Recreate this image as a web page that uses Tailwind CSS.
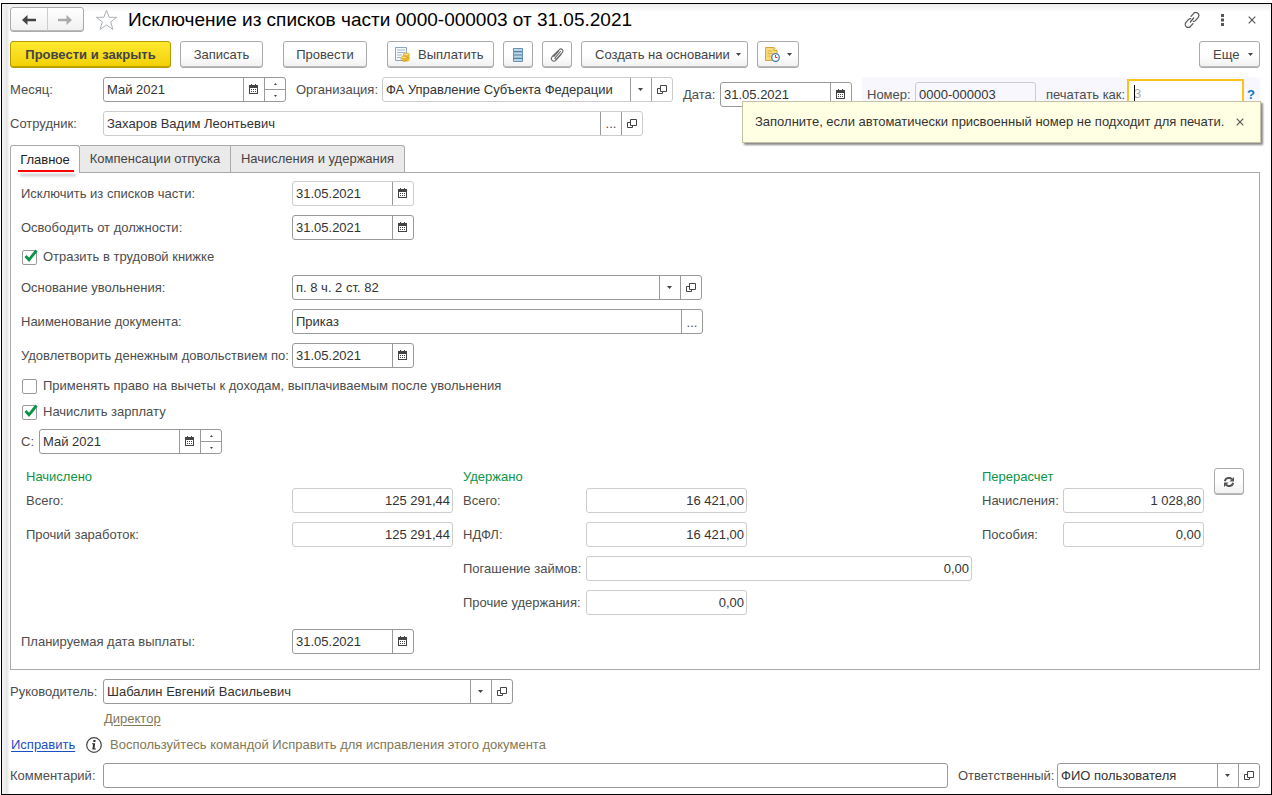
<!DOCTYPE html>
<html lang="ru">
<head>
<meta charset="utf-8">
<meta name="viewport" content="width=device-width, initial-scale=1">
<title>Исключение из списков части</title>
<script src="https://cdn.jsdelivr.net/npm/@tailwindcss/browser@4"></script>
</head>
<body class="flex min-h-screen bg-white pt-[3px] pl-px font-['Liberation_Sans',Arial,sans-serif] text-[13px] leading-4 text-[#4d4d4d]">

<svg class="hidden" aria-hidden="true">
  <symbol id="cal" viewBox="0 0 9 10"><path d="M0 1h9v9H0z M2 0h1v1H2z M6 0h1v1H6z" fill="#444"/><path d="M1 4h7v5H1z" fill="#fff"/><path d="M2 5h1v1H2zM4 5h1v1H4zM6 5h1v1H6zM2 7h1v1H2zM4 7h1v1H4zM6 7h1v1H6z" fill="#444"/></symbol>
  <symbol id="down" viewBox="0 0 5 3"><path d="M0 0h5L2.500 3z" fill="#444"/></symbol>
  <symbol id="up" viewBox="0 0 5 3"><path d="M0 3h5L2.500 0z" fill="#444"/></symbol>
  <symbol id="open" viewBox="0 0 10 10"><path d="M3.500 .5h6v6h-6zM3.500 3.500h-3v5h5v-2" fill="none" stroke="#444"/></symbol>
  <symbol id="tick" viewBox="0 0 15 14"><path d="M2.500 7 6 10.800 13.500 1.500" fill="none" stroke="#0a9447" stroke-width="2.800"/></symbol>
  <symbol id="cross" viewBox="0 0 8 8"><path d="M.7.700l6.600 6.600M7.300.700L.7 7.300" fill="none" stroke="#555" stroke-width="1.200"/></symbol>
</svg>

<main class="flex grow flex-col border border-black bg-[linear-gradient(to_bottom,#ececec,#ffffff00_8px),linear-gradient(to_right,#f4f4f4,#e6e6e6_5px,#fff_8px)] pt-[3px] pr-[11px] pb-[6px] pl-2">

  <header class="flex h-[25px] items-center">
    <div class="flex h-[25px] w-[74px] rounded-[3px] border border-[#aaa] bg-linear-to-b from-white to-[#f0f0f0] shadow-[inset_0_-1px_0_#bbb]">
      <button type="button" aria-label="Назад" class="grid flex-1 place-items-center border-r border-[#ccc]"><svg class="h-[10px] w-[14px]" viewBox="0 0 14 10"><path d="M0 5l5.500-5v3.800H14v2.400H5.500V10z" fill="#444"/></svg></button>
      <button type="button" aria-label="Вперед" class="grid flex-1 place-items-center"><svg class="h-[10px] w-[14px]" viewBox="0 0 14 10"><path d="M14 5L8.500 0v3.800H0v2.400h8.500V10z" fill="#aaa"/></svg></button>
    </div>
    <button type="button" aria-label="В избранное" class="ml-[11px]"><svg class="h-[22px] w-[23px]" viewBox="0 0 23 22"><path d="M11.500 1.300l2.700 7h7.500l-6 4.600 2.200 7.500-6.400-4.400-6.400 4.400 2.200-7.500-6-4.600h7.500z" fill="#fff" stroke="#a9b0b6"/></svg></button>
    <h1 class="ml-[10px] text-[19px] leading-6 text-black">Исключение из списков части 0000-000003 от 31.05.2021</h1>
    <div class="ml-auto flex items-center pr-1">
      <button type="button" aria-label="Ссылка"><svg class="h-4 w-4" viewBox="0 0 16 16" fill="none" stroke="#555" stroke-width="1.200" stroke-linecap="round"><path d="M7 4.300l2.300-2.500a2.900 2.900 0 0 1 4.900 3.500l-2.800 3.300a2.600 2.600 0 0 1-2 .8M9 11.700l-2.300 2.500a2.900 2.900 0 0 1-4.900-3.500l2.800-3.300a2.600 2.600 0 0 1 2-.8M6.300 10l3.400-4"/></svg></button>
      <button type="button" aria-label="Меню" class="ml-[21px]"><svg class="h-3 w-[3px]" viewBox="0 0 3 12"><path d="M0 0h3v3H0zM0 4.500h3v3H0zM0 9h3v3H0z" fill="#555"/></svg></button>
      <button type="button" aria-label="Закрыть" class="ml-6"><svg class="size-2"><use href="#cross"/></svg></button>
    </div>
  </header>

  <div class="mt-[9px] flex h-[27px]">
    <button type="button" class="w-[161px] rounded-[3px] border border-[#b59b00] bg-linear-to-b from-[#ffe92e] to-[#f2d000] font-bold text-[#444] shadow-[inset_0_-1px_0_#c0a400]">Провести и закрыть</button>
    <button type="button" class="ml-[9px] w-[83px] rounded-[3px] border border-[#aaa] bg-linear-to-b from-white from-50% to-[#f0f0f0] text-[#444] shadow-[inset_0_-1px_0_#bbb]">Записать</button>
    <button type="button" class="ml-5 w-[84px] rounded-[3px] border border-[#aaa] bg-linear-to-b from-white from-50% to-[#f0f0f0] text-[#444] shadow-[inset_0_-1px_0_#bbb]">Провести</button>
    <button type="button" class="ml-5 flex w-[107px] items-center gap-2 rounded-[3px] border border-[#aaa] bg-linear-to-b from-white from-50% to-[#f0f0f0] pl-[7px] text-[#444] shadow-[inset_0_-1px_0_#bbb]"><svg class="size-[15px] shrink-0" viewBox="0 0 15 15"><path d="M.5.500h11v13H.5z" fill="#f7fafc" stroke="#8ba6b9"/><path d="M2 3h8M2 5.500h8M2 8h5M2 10.500h4" stroke="#9db8ca"/><path d="M8 7.500c0-2 6.500-2 6.500 0v5.500c0 2-7 2-7 0v-3z" fill="#f2bd2b"/><ellipse cx="11.500" cy="7.500" rx="3" ry="1.400" fill="#ffe27a" stroke="#c98b10" stroke-width=".6"/><ellipse cx="9" cy="10.500" rx="2.800" ry="1.300" fill="#ffe27a" stroke="#c98b10" stroke-width=".6"/><path d="M6.200 11v2c1 1.600 5 1.600 6 0M12 11c1 0 2.300-.4 2.500-1" fill="none" stroke="#c98b10" stroke-width=".7"/></svg>Выплатить</button>
    <button type="button" aria-label="Список" class="ml-[9px] grid w-[30px] place-items-center rounded-[3px] border border-[#aaa] bg-linear-to-b from-white from-50% to-[#f0f0f0] shadow-[inset_0_-1px_0_#bbb]"><svg class="h-[14px] w-[10px]" viewBox="0 0 10 14"><path d="M.5.500h9v13h-9z" fill="#b9d5e8" stroke="#6992af"/><path d="M1 3.700h8M1 7h8M1 10.300h8" stroke="#587f9b" stroke-width="1.200"/></svg></button>
    <button type="button" aria-label="Файлы" class="ml-[9px] grid w-[30px] place-items-center rounded-[3px] border border-[#aaa] bg-linear-to-b from-white from-50% to-[#f0f0f0] shadow-[inset_0_-1px_0_#bbb]"><svg class="size-[14px]" viewBox="0 0 14 14" fill="none" stroke="#666" stroke-width="1.100" stroke-linecap="round"><path d="M10.500 3.500L5.300 9.600c-.9 1 .4 2.200 1.300 1.200l5.600-6.200c2-2.400-1-5-3.100-2.800L2.300 8.500c-2.600 3 1 6.300 3.700 3.600l5-5.400M8.800 3L4 8.400"/></svg></button>
    <button type="button" class="ml-[9px] flex w-[167px] items-center justify-between rounded-[3px] border border-[#aaa] bg-linear-to-b from-white from-50% to-[#f0f0f0] pr-[6px] pl-[13px] whitespace-nowrap text-[#444] shadow-[inset_0_-1px_0_#bbb]">Создать на основании<svg class="h-[3px] w-[5px]"><use href="#down"/></svg></button>
    <button type="button" aria-label="Отложенное" class="ml-[9px] flex w-[42px] items-center justify-between rounded-[3px] border border-[#aaa] bg-linear-to-b from-white from-50% to-[#f0f0f0] pr-[6px] pl-[7px] shadow-[inset_0_-1px_0_#bbb]"><svg class="size-[15px]" viewBox="0 0 15 15"><path d="M.5.500h8.500l3 3v10H.5z" fill="#f7db7c" stroke="#d3a73a"/><path d="M9 .5v3h3" fill="#fff3c0" stroke="#d3a73a"/><path d="M2.500 4h5M2.500 6.500h5M2.500 9h3" stroke="#d9b04a"/><circle cx="10.500" cy="10.500" r="3.800" fill="#fff" stroke="#4a7fb5" stroke-width="1.300"/><path d="M10.500 8v2.500H12.500" fill="none" stroke="#d33"/></svg><svg class="h-[3px] w-[5px]"><use href="#down"/></svg></button>
    <button type="button" class="ml-auto flex w-[61px] items-center justify-between rounded-[3px] border border-[#aaa] bg-linear-to-b from-white from-50% to-[#f0f0f0] pr-[6px] pl-[13px] text-[#444] shadow-[inset_0_-1px_0_#bbb]">Еще<svg class="h-[3px] w-[5px]"><use href="#down"/></svg></button>
  </div>

  <div class="relative mt-[9px] flex h-[30px] items-start whitespace-nowrap">
    <label for="month" class="w-[93px] shrink-0 leading-[25px]">Месяц:</label>
    <div class="flex h-[25px] w-[183px] rounded-[3px] border border-[#999] bg-white">
      <input id="month" value="Май 2021" class="w-0 flex-1 px-[3px] text-[#333] outline-none">
      <button type="button" aria-label="Календарь" class="grid w-[21px] place-items-center border-l border-[#999] pr-px pb-px"><svg class="h-[10px] w-[9px]"><use href="#cal"/></svg></button>
      <div class="flex w-[21px] flex-col border-l border-[#999]"><button type="button" aria-label="Больше" class="grid flex-1 place-items-center border-b border-[#999]"><svg class="h-[2px] w-[3px]"><use href="#up"/></svg></button><button type="button" aria-label="Меньше" class="grid flex-1 place-items-center"><svg class="h-[2px] w-[3px]"><use href="#down"/></svg></button></div>
    </div>
    <label for="org" class="ml-[10px] w-[86px] shrink-0 leading-[25px]">Организация:</label>
    <div class="flex h-[25px] w-[291px] rounded-[3px] border border-[#ccc] bg-white">
      <input id="org" value="ФА Управление Субъекта Федерации" class="w-0 flex-1 px-[3px] text-[#333] outline-none">
      <button type="button" aria-label="Выбрать" class="grid w-[21px] place-items-center border-l border-[#999] pr-px"><svg class="h-[3px] w-[5px]"><use href="#down"/></svg></button>
      <button type="button" aria-label="Открыть" class="grid w-[21px] place-items-center border-l border-[#999]"><svg class="size-[10px]"><use href="#open"/></svg></button>
    </div>
    <div class="ml-[10px] flex self-end">
      <label for="date" class="w-[37px] leading-[25px]">Дата:</label>
      <div class="flex h-[25px] w-[132px] rounded-[3px] border border-[#999] bg-white">
        <input id="date" value="31.05.2021" class="w-0 flex-1 px-[3px] text-[#333] outline-none">
        <button type="button" aria-label="Календарь" class="grid w-[21px] place-items-center border-l border-[#999] pr-px pb-px"><svg class="h-[10px] w-[9px]"><use href="#cal"/></svg></button>
      </div>
    </div>
    <div class="ml-[10px] flex h-[30px] grow items-end bg-[#f7f7fd] pl-[5px]">
      <label for="num" class="w-12 leading-[25px]">Номер:</label>
      <input id="num" value="0000-000003" readonly class="h-[25px] w-[121px] rounded-[3px] border border-[#ccc] px-[3px] text-[#333] outline-none">
      <label for="print" class="ml-[10px] w-[81px] leading-[25px]">печатать как:</label>
      <div class="relative h-[28px] w-[117px] border-2 border-[#fcc419] bg-white">
        <input id="print" placeholder="3" class="h-full w-full pl-[5px] outline-none placeholder:text-[#aaa]">
        <span class="absolute top-[4px] left-[5px] h-4 w-px bg-black"></span>
      </div>
      <button type="button" aria-label="Справка" class="ml-[3px] leading-[25px] font-bold text-[#0a78c8]">?</button>
    </div>
    <div role="tooltip" class="absolute top-[24px] -right-px z-10 flex h-[42px] w-[519px] items-center justify-between border border-[#c5c3a5] bg-[#ffffe4] pr-4 pl-3 text-[#333] shadow-[2px_2px_2px_#888]">Заполните, если автоматически присвоенный номер не подходит для печати.<button type="button" aria-label="Закрыть подсказку" class="grid"><svg class="size-2"><use href="#cross"/></svg></button></div>
  </div>

  <div class="mt-1 flex h-[25px]">
    <label for="emp" class="w-[93px] shrink-0 leading-[25px]">Сотрудник:</label>
    <div class="flex w-[540px] rounded-[3px] border border-[#ccc] bg-white">
      <input id="emp" value="Захаров Вадим Леонтьевич" class="w-0 flex-1 px-[3px] text-[#333] outline-none">
      <button type="button" aria-label="Выбрать" class="w-[21px] border-l border-[#999]">...</button>
      <button type="button" aria-label="Открыть" class="grid w-[21px] place-items-center border-l border-[#999]"><svg class="size-[10px]"><use href="#open"/></svg></button>
    </div>
  </div>

  <div role="tablist" class="relative z-1 mt-[9px] -mb-px flex h-[28px] text-[#444]">
    <button type="button" role="tab" aria-selected="true" class="relative w-[70px] rounded-t-[3px] border border-b-0 border-[#aaa] bg-white text-[#222]">Главное<span class="absolute right-[5px] bottom-px left-[7px] h-[2px] bg-[#ff0000] shadow-[2px_4px_3px_#bbb]"></span></button>
    <button type="button" role="tab" class="w-[151px] border border-l-0 border-[#aaa] bg-[#eaeaea]">Компенсации отпуска</button>
    <button type="button" role="tab" class="w-[174px] rounded-tr-[3px] border border-l-0 border-[#aaa] bg-[#eaeaea]">Начисления и удержания</button>
  </div>

  <section class="flex flex-col border border-[#aaa] bg-white pt-2 pr-[15px] pb-[15px] pl-[10px]">
    <div class="grid grid-cols-[271px_1fr] gap-y-[9px] leading-[25px]">
      <label for="d1">Исключить из списков части:</label>
      <div class="flex h-[25px] w-[122px] rounded-[3px] border border-[#ccc]"><input id="d1" value="31.05.2021" class="w-0 flex-1 px-[3px] text-[#333] outline-none"><button type="button" aria-label="Календарь" class="grid w-[21px] place-items-center border-l border-[#999] pr-px pb-px"><svg class="h-[10px] w-[9px]"><use href="#cal"/></svg></button></div>
      <label for="d2">Освободить от должности:</label>
      <div class="flex h-[25px] w-[122px] rounded-[3px] border border-[#999]"><input id="d2" value="31.05.2021" class="w-0 flex-1 px-[3px] text-[#333] outline-none"><button type="button" aria-label="Календарь" class="grid w-[21px] place-items-center border-l border-[#999] pr-px pb-px"><svg class="h-[10px] w-[9px]"><use href="#cal"/></svg></button></div>
    </div>
    <label class="mt-[9px] ml-px flex h-4 items-center gap-[6px]"><span class="relative size-[15px]"><input type="checkbox" checked class="block size-[15px] appearance-none rounded-[2px] border border-[#999]"><svg class="pointer-events-none absolute -top-px left-px h-[14px] w-[15px]"><use href="#tick"/></svg></span>Отразить в трудовой книжке</label>
    <div class="mt-[10px] grid grid-cols-[271px_1fr] gap-y-[9px] leading-[25px]">
      <label for="reason">Основание увольнения:</label>
      <div class="flex h-[25px] w-[410px] rounded-[3px] border border-[#999]"><input id="reason" value="п. 8 ч. 2 ст. 82" class="w-0 flex-1 px-[3px] text-[#333] outline-none"><button type="button" aria-label="Выбрать" class="grid w-[21px] place-items-center border-l border-[#999] pr-px"><svg class="h-[3px] w-[5px]"><use href="#down"/></svg></button><button type="button" aria-label="Открыть" class="grid w-[21px] place-items-center border-l border-[#999]"><svg class="size-[10px]"><use href="#open"/></svg></button></div>
      <label for="doc">Наименование документа:</label>
      <div class="flex h-[25px] w-[411px] rounded-[3px] border border-[#999]"><input id="doc" value="Приказ" class="w-0 flex-1 px-[3px] text-[#333] outline-none"><button type="button" aria-label="Выбрать" class="w-[21px] border-l border-[#999]">...</button></div>
      <label for="d3" class="whitespace-nowrap">Удовлетворить денежным довольствием по:</label>
      <div class="flex h-[25px] w-[122px] rounded-[3px] border border-[#999]"><input id="d3" value="31.05.2021" class="w-0 flex-1 px-[3px] text-[#333] outline-none"><button type="button" aria-label="Календарь" class="grid w-[21px] place-items-center border-l border-[#999] pr-px pb-px"><svg class="h-[10px] w-[9px]"><use href="#cal"/></svg></button></div>
    </div>
    <label class="mt-[10px] ml-px flex h-4 items-center gap-[6px]"><input type="checkbox" class="block size-[15px] appearance-none rounded-[2px] border border-[#999]">Применять право на вычеты к доходам, выплачиваемым после увольнения</label>
    <label class="mt-[10px] ml-px flex h-4 items-center gap-[6px]"><span class="relative size-[15px]"><input type="checkbox" checked class="block size-[15px] appearance-none rounded-[2px] border border-[#999]"><svg class="pointer-events-none absolute -top-px left-px h-[14px] w-[15px]"><use href="#tick"/></svg></span>Начислить зарплату</label>
    <div class="mt-[9px] flex h-[25px]">
      <label for="from" class="w-[18px] leading-[25px]">С:</label>
      <div class="flex w-[183px] rounded-[3px] border border-[#999]">
        <input id="from" value="Май 2021" class="w-0 flex-1 px-[3px] text-[#333] outline-none">
        <button type="button" aria-label="Календарь" class="grid w-[21px] place-items-center border-l border-[#999] pr-px pb-px"><svg class="h-[10px] w-[9px]"><use href="#cal"/></svg></button>
        <div class="flex w-[21px] flex-col border-l border-[#999]"><button type="button" aria-label="Больше" class="grid flex-1 place-items-center border-b border-[#999]"><svg class="h-[2px] w-[3px]"><use href="#up"/></svg></button><button type="button" aria-label="Меньше" class="grid flex-1 place-items-center"><svg class="h-[2px] w-[3px]"><use href="#down"/></svg></button></div>
      </div>
    </div>

    <div class="mt-[14px] ml-[5px] flex items-start gap-[10px] whitespace-nowrap">
      <div>
        <h2 class="h-5 leading-[18px] text-[#0a9447]">Начислено</h2>
        <div class="grid grid-cols-[266px_161px] gap-y-[9px] leading-[25px]">
          <label for="a1">Всего:</label><input id="a1" readonly value="125 291,44" class="h-[25px] rounded-[3px] border border-[#ccc] px-[2px] text-right text-[#333] outline-none">
          <label for="a2">Прочий заработок:</label><input id="a2" readonly value="125 291,44" class="h-[25px] rounded-[3px] border border-[#ccc] px-[2px] text-right text-[#333] outline-none">
        </div>
      </div>
      <div>
        <h2 class="h-5 leading-[18px] text-[#0a9447]">Удержано</h2>
        <div class="grid grid-cols-[123px_386px] gap-y-[9px] leading-[25px]">
          <label for="b1">Всего:</label><input id="b1" readonly value="16 421,00" class="h-[25px] w-[161px] rounded-[3px] border border-[#ccc] px-[2px] text-right text-[#333] outline-none">
          <label for="b2">НДФЛ:</label><input id="b2" readonly value="16 421,00" class="h-[25px] w-[161px] rounded-[3px] border border-[#ccc] px-[2px] text-right text-[#333] outline-none">
          <label for="b3">Погашение займов:</label><input id="b3" readonly value="0,00" class="h-[25px] rounded-[3px] border border-[#ccc] px-[2px] text-right text-[#333] outline-none">
          <label for="b4">Прочие удержания:</label><input id="b4" readonly value="0,00" class="h-[25px] w-[161px] rounded-[3px] border border-[#ccc] px-[2px] text-right text-[#333] outline-none">
        </div>
      </div>
      <div>
        <h2 class="h-5 leading-[18px] text-[#0a9447]">Перерасчет</h2>
        <div class="grid grid-cols-[81px_141px] gap-y-[9px] leading-[25px]">
          <label for="c1">Начисления:</label><input id="c1" readonly value="1 028,80" class="h-[25px] rounded-[3px] border border-[#ccc] px-[2px] text-right text-[#333] outline-none">
          <label for="c2">Пособия:</label><input id="c2" readonly value="0,00" class="h-[25px] rounded-[3px] border border-[#ccc] px-[2px] text-right text-[#333] outline-none">
        </div>
      </div>
      <button type="button" aria-label="Пересчитать" class="grid h-[27px] w-[30px] place-items-center rounded-[3px] border border-[#aaa] bg-linear-to-b from-white from-50% to-[#f0f0f0] shadow-[inset_0_-1px_0_#bbb]"><svg class="size-[10px]" viewBox="0 0 10 10"><path d="M.8 4.200C1.500.6 6 0 8 2.300M9.200 5.800C8.500 9.400 4 10 2 7.700" fill="none" stroke="#555" stroke-width="2"/><path d="M10 0v4.500H5.500zM0 10V5.500h4.500z" fill="#555"/></svg></button>
    </div>

    <div class="mt-[14px] grid grid-cols-[271px_1fr] leading-[25px]">
      <label for="d4">Планируемая дата выплаты:</label>
      <div class="flex h-[25px] w-[122px] rounded-[3px] border border-[#999]"><input id="d4" value="31.05.2021" class="w-0 flex-1 px-[3px] text-[#333] outline-none"><button type="button" aria-label="Календарь" class="grid w-[21px] place-items-center border-l border-[#999] pr-px pb-px"><svg class="h-[10px] w-[9px]"><use href="#cal"/></svg></button></div>
    </div>
  </section>

  <div class="mt-[9px] flex h-[25px]">
    <label for="boss" class="w-[93px] shrink-0 leading-[25px]">Руководитель:</label>
    <div class="flex w-[410px] rounded-[3px] border border-[#999] bg-white"><input id="boss" value="Шабалин Евгений Васильевич" class="w-0 flex-1 px-[3px] text-[#333] outline-none"><button type="button" aria-label="Выбрать" class="grid w-[21px] place-items-center border-l border-[#999] pr-px"><svg class="h-[3px] w-[5px]"><use href="#down"/></svg></button><button type="button" aria-label="Открыть" class="grid w-[21px] place-items-center border-l border-[#999]"><svg class="size-[10px]"><use href="#open"/></svg></button></div>
  </div>
  <a href="#" class="mt-[7px] ml-[94px] self-start text-[#827857] underline underline-offset-2">Директор</a>
  <div class="mt-[9px] flex h-[18px] items-center">
    <a href="#" class="w-[76px] pl-px text-[#1a4fc4] underline underline-offset-2">Исправить</a>
    <svg class="size-4" viewBox="0 0 16 16"><circle cx="8" cy="8" r="7.300" fill="#fff" stroke="#444" stroke-width="1.200"/><path d="M7.300 3h2.200v2H7.300zM6 6.300h3.200L8.500 11.500H10v1H6.300l.8-5.200H6z" fill="#333"/></svg>
    <p class="ml-2 text-[#827857]">Воспользуйтесь командой Исправить для исправления этого документа</p>
  </div>
  <div class="mt-[9px] flex h-[25px]">
    <label for="comment" class="w-[93px] shrink-0 leading-[25px]">Комментарий:</label>
    <input id="comment" class="w-0 grow rounded-[3px] border border-[#999] bg-white px-[3px] text-[#333] outline-none">
    <label for="resp" class="ml-[10px] w-[99px] shrink-0 leading-[25px]">Ответственный:</label>
    <div class="flex w-[203px] rounded-[3px] border border-[#999] bg-white"><input id="resp" value="ФИО пользователя" class="w-0 flex-1 px-[3px] text-[#333] outline-none"><button type="button" aria-label="Выбрать" class="grid w-[21px] place-items-center border-l border-[#999] pr-px"><svg class="h-[3px] w-[5px]"><use href="#down"/></svg></button><button type="button" aria-label="Открыть" class="grid w-[21px] place-items-center border-l border-[#999]"><svg class="size-[10px]"><use href="#open"/></svg></button></div>
  </div>
</main>
</body>
</html>
